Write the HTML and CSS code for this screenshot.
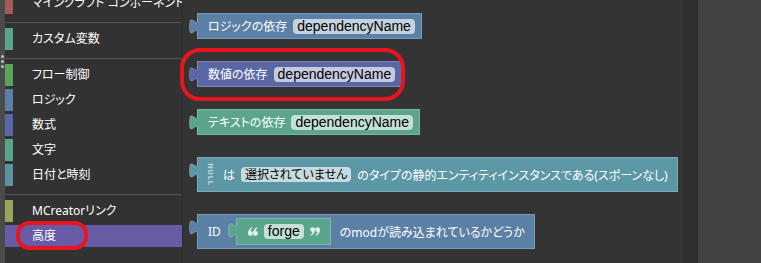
FILE: index.html
```html
<!DOCTYPE html>
<html lang="ja">
<head>
  <meta charset="UTF-8">
  <title>MCreator Blockly</title>
  <link rel="stylesheet" href="styles.css">
</head>
<body>
  <div class="app">
    <div class="edge">
      <span class="dot"></span>
      <span class="dot"></span>
      <span class="dot"></span>
    </div>

    <nav class="toolbox">
      <div class="cat cat-mc first">マインクラフト コンポーネント</div>
      <div class="sep"></div>
      <div class="cat cat-var">カスタム変数</div>
      <div class="sep"></div>
      <div class="cat cat-flow">フロー制御</div>
      <div class="cat cat-logic">ロジック</div>
      <div class="cat cat-math">数式</div>
      <div class="cat cat-text">文字</div>
      <div class="cat cat-time">日付と時刻</div>
      <div class="sep"></div>
      <div class="cat cat-link">MCreatorリンク</div>
      <div class="cat cat-adv selected">高度</div>
    </nav>

    <main class="workspace">
      <div class="block logic">
        <svg class="tab" width="9" height="16" viewBox="0 0 9 16"><path class="tab-fill" d="M9 0 H8.5 C8.5 10 0.5 -8.5 0.5 7.5 S8.5 4 8.5 15 H9 Z"/><path class="tab-line" d="M8.5 0 C8.5 10 0.5 -8.5 0.5 7.5 S8.5 4 8.5 15"/></svg>
        <span class="label">ロジックの依存</span>
        <span class="field">dependencyName</span>
      </div>

      <div class="block math">
        <svg class="tab" width="9" height="16" viewBox="0 0 9 16"><path class="tab-fill" d="M9 0 H8.5 C8.5 10 0.5 -8.5 0.5 7.5 S8.5 4 8.5 15 H9 Z"/><path class="tab-line" d="M8.5 0 C8.5 10 0.5 -8.5 0.5 7.5 S8.5 4 8.5 15"/></svg>
        <span class="label">数値の依存</span>
        <span class="field">dependencyName</span>
      </div>

      <div class="block text">
        <svg class="tab" width="9" height="16" viewBox="0 0 9 16"><path class="tab-fill" d="M9 0 H8.5 C8.5 10 0.5 -8.5 0.5 7.5 S8.5 4 8.5 15 H9 Z"/><path class="tab-line" d="M8.5 0 C8.5 10 0.5 -8.5 0.5 7.5 S8.5 4 8.5 15"/></svg>
        <span class="label">テキストの依存</span>
        <span class="field">dependencyName</span>
      </div>

      <div class="block entity tall">
        <svg class="tab" width="9" height="16" viewBox="0 0 9 16"><path class="tab-fill" d="M9 0 H8.5 C8.5 10 0.5 -8.5 0.5 7.5 S8.5 4 8.5 15 H9 Z"/><path class="tab-line" d="M8.5 0 C8.5 10 0.5 -8.5 0.5 7.5 S8.5 4 8.5 15"/></svg>
        <span class="null-tag">NULL</span>
        <span class="label">は</span>
        <span class="field">選択されていません</span>
        <span class="label">のタイプの静的エンティティインスタンスである(スポーンなし)</span>
      </div>

      <div class="block logic tall">
        <svg class="tab" width="9" height="16" viewBox="0 0 9 16"><path class="tab-fill" d="M9 0 H8.5 C8.5 10 0.5 -8.5 0.5 7.5 S8.5 4 8.5 15 H9 Z"/><path class="tab-line" d="M8.5 0 C8.5 10 0.5 -8.5 0.5 7.5 S8.5 4 8.5 15"/></svg>
        <span class="label">ID</span>
        <div class="block text inner">
          <svg class="tab" width="9" height="16" viewBox="0 0 9 16"><path class="tab-fill" d="M9 0 H8.5 C8.5 10 0.5 -8.5 0.5 7.5 S8.5 4 8.5 15 H9 Z"/><path class="tab-line" d="M8.5 0 C8.5 10 0.5 -8.5 0.5 7.5 S8.5 4 8.5 15"/></svg>
          <svg class="quote" width="10" height="9" viewBox="0 0 10 9"><circle cx="2.4" cy="6.4" r="2.4"/><path d="M0.1 6.2 C0.1 3.4 1.6 1.2 4 0.2 L4.5 1.1 C3.2 1.9 2.6 3 2.5 4.2 Z"/><circle cx="7.4" cy="6.4" r="2.4"/><path d="M5.1 6.2 C5.1 3.4 6.6 1.2 9 0.2 L9.5 1.1 C8.2 1.9 7.6 3 7.5 4.2 Z"/></svg>
          <span class="field">forge</span>
          <svg class="quote" width="10" height="9" viewBox="0 0 10 9"><g transform="rotate(180 5 4.5)"><circle cx="2.4" cy="6.4" r="2.4"/><path d="M0.1 6.2 C0.1 3.4 1.6 1.2 4 0.2 L4.5 1.1 C3.2 1.9 2.6 3 2.5 4.2 Z"/><circle cx="7.4" cy="6.4" r="2.4"/><path d="M5.1 6.2 C5.1 3.4 6.6 1.2 9 0.2 L9.5 1.1 C8.2 1.9 7.6 3 7.5 4.2 Z"/></g></svg>
        </div>
        <span class="label">のmodが読み込まれているかどうか</span>
      </div>
    </main>

    <div class="scroll-track"></div>
    <div class="side-panel"></div>
  </div>

  <!-- red highlight marks drawn over the screenshot -->
  <div class="mark mark-block"></div>
  <div class="mark mark-cat"></div>
</body>
</html>
```

FILE: styles.css
```css
* {
  margin: 0;
  padding: 0;
  box-sizing: border-box;
}
body {
  position: relative;
  width: 761px;
  height: 263px;
  overflow: hidden;
  background: #343434;
  font-family: 'Noto Sans', 'Noto Sans CJK JP', sans-serif;
  font-feature-settings: "palt";
  color: #fff;
}
.app {
  display: flex;
  height: 263px;
}
.edge {
  flex: 0 0 5px;
  background: #4b4b4b;
  display: flex;
  flex-direction: column;
  align-items: center;
  gap: 2px;
  padding-top: 55px;
}
.dot {
  width: 3px;
  height: 3px;
  border-radius: 50%;
  background: #bdbdbd;
}
.toolbox {
  flex: 0 0 178px;
  background: #323232;
  border-right: 1px solid #2c2c2c;
  overflow: hidden;
}
.cat {
  height: 22px;
  line-height: 22px;
  margin-bottom: 3px;
  padding-left: 19px;
  border-left: 8px solid #888;
  font-size: 12px;
  white-space: nowrap;
}
.cat.first {
  margin-top: -8px;
}
.sep {
  height: 1px;
  background: #555;
  margin: 8px 0 5px;
}
.cat-mc { border-left-color: #a55b5b; }
.cat-var { border-left-color: #5ba58c; }
.cat-flow { border-left-color: #5ba55b; }
.cat-logic { border-left-color: #5b80a5; }
.cat-math { border-left-color: #5b67a5; }
.cat-text { border-left-color: #5ba58c; }
.cat-time { border-left-color: #5b959f; }
.cat-link { border-left-color: #9aa55b; }
.cat-adv { border-left-color: #675ba5; }
.cat.selected {
  background: #675ba5;
}

.workspace {
  flex: 1 1 0;
  min-width: 0;
  overflow: hidden;
  background: #343434;
  display: flex;
  flex-direction: column;
  align-items: flex-start;
  gap: 22px;
  padding: 13px 0 0 14px;
}
.block {
  --c: #5b80a5;
  position: relative;
  display: flex;
  flex-shrink: 0;
  align-items: center;
  gap: 6px;
  height: 26px;
  padding: 0 6px 0 10px;
  background: var(--c);
  border: 1px solid rgba(255, 255, 255, 0.2);
  white-space: nowrap;
}
.block.tall {
  height: 35px;
  padding-right: 9px;
}
.block.entity {
  padding-left: 8px;
}
.logic { --c: #5b80a5; }
.math { --c: #5b67a5; }
.text { --c: #5ba58c; }
.entity { --c: #5b97a5; }
.tab {
  position: absolute;
  left: -9px;
  top: 5px;
}
.tab-fill {
  fill: var(--c);
}
.tab-line {
  fill: none;
  stroke: rgba(255, 255, 255, 0.25);
  stroke-width: 1;
}
.label {
  font-size: 12px;
  color: #fff;
}
.field {
  height: 15px;
  line-height: 15px;
  padding: 0 4px;
  border-radius: 4px;
  background: rgba(255, 255, 255, 0.65);
  color: #000;
  font-family: 'Liberation Sans', 'Noto Sans CJK JP', sans-serif;
  font-size: 14px;
}
.entity .field {
  font-family: 'Noto Sans', 'Noto Sans CJK JP', sans-serif;
  font-size: 12px;
}
.null-tag {
  writing-mode: vertical-rl;
  font-family: 'DejaVu Sans', sans-serif;
  font-size: 7px;
  line-height: 7px;
  font-weight: bold;
  color: rgba(255, 255, 255, 0.6);
  margin-right: 4px;
  letter-spacing: 0.5px;
}
.block.inner {
  height: 27px;
  padding: 0 10px 0 11px;
  gap: 6px;
  margin: 0 3px 0 9px;
}
.block.inner .tab {
  top: 4px;
}
.quote {
  fill: #e4f2ec;
}

.scroll-track {
  flex: 0 0 15px;
  background: #2f2f2f;
}
.side-panel {
  flex: 0 0 63px;
  background: #424242;
}

.mark {
  position: absolute;
  border: 4px solid #e8151f;
}
.mark-block {
  left: 180px;
  top: 48px;
  width: 225px;
  height: 53px;
  border-radius: 20px;
}
.mark-cat {
  left: 16px;
  top: 221px;
  width: 72px;
  height: 29px;
  border-radius: 13px;
}
```
